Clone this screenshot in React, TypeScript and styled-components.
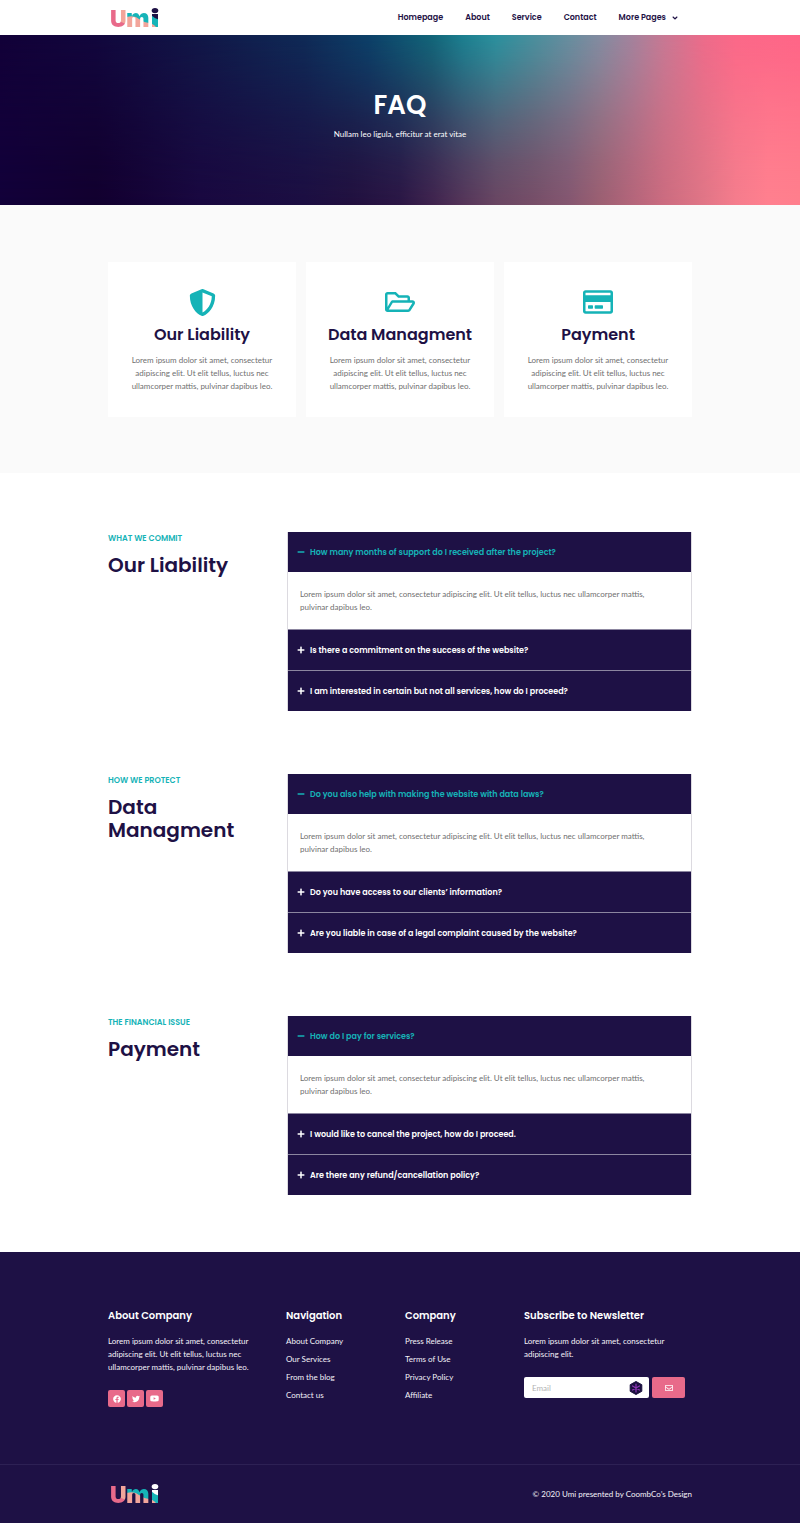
import React, { useId, useState } from "react";
import styled, { createGlobalStyle } from "styled-components";
import {
  FaAngleDown,
  FaFacebook,
  FaMinus,
  FaPlus,
  FaRegCreditCard,
  FaRegEnvelope,
  FaRegFolderOpen,
  FaShieldAlt,
  FaTwitter,
  FaYoutube,
} from "react-icons/fa";

const navy = "#1e1145";
const teal = "#15b3b7";
const pink = "#e86a8a";
const grey = "#6f6f6f";
const display = `Poppins, Inter, "Liberation Sans", sans-serif`;

const GlobalStyle = createGlobalStyle`
  *, *::before, *::after { box-sizing: border-box; }
  body {
    margin: 0;
    background: #fff;
    color: ${grey};
    font-family: Lato, "Liberation Sans", sans-serif;
    font-size: 8px;
    line-height: 13px;
  }
  h1, h2, h3, p, ul { margin: 0; padding: 0; }
  ul { list-style: none; }
  a { color: inherit; text-decoration: none; }
  button, input { font: inherit; border: 0; }
  button { cursor: pointer; }
`;

const Container = styled.div`
  width: 100%;
  max-width: 584px;
  margin: 0 auto;
`;

const Header = styled.header`
  background: #fff;
`;

const HeaderRow = styled(Container)`
  display: flex;
  align-items: center;
  justify-content: space-between;
  height: 35px;
  padding-right: 13px;
`;

const LogoLink = styled.a`
  display: block;
  height: 24px;
`;

const Nav = styled.nav`
  display: flex;
  gap: 22px;
`;

const NavLink = styled.a`
  display: flex;
  align-items: center;
  gap: 5px;
  color: ${navy};
  font-family: ${display};
  font-weight: 600;
`;

/* Two horizontal colour ramps: the upper one fades out over the lower one. */
const Hero = styled.section`
  position: relative;
  isolation: isolate;
  display: flex;
  flex-direction: column;
  align-items: center;
  gap: 7px;
  padding: 54px 0 64px;
  color: #fff;
  text-align: center;
  background: linear-gradient(90deg, #12003a 0%, #12002f 12%, #190840 25%, #1c0e42 38%, #22103f 44%, #2c1645 50%, #40234e 54%, #563559 58%, #6a4562 62%, #784e68 67%, #855670 71%, #9c5f72 75%, #b4657a 79%, #cc6c80 83%, #e17687 88%, #f57d8d 92%, #ff808f 96%, #ff7f8d 100%);

  &::before {
    content: "";
    position: absolute;
    inset: 0;
    z-index: -1;
    background: linear-gradient(90deg, #120038 0%, #12063d 12%, #111747 25%, #0f2a56 38%, #0c4068 46%, #126579 54%, #1c8090 58%, #2b909d 62%, #4b8f9d 67%, #668e9f 71%, #838ba0 75%, #a3829c 79%, #c77893 83%, #ec6b8a 88%, #fb6888 92%, #ff6587 100%);
    mask-image: linear-gradient(180deg, #000 0%, rgba(0, 0, 0, 0.85) 15%, rgba(0, 0, 0, 0.4) 50%, rgba(0, 0, 0, 0.15) 75%, transparent 100%);
  }
`;

const HeroTitle = styled.h1`
  font-family: ${display};
  font-size: 26px;
  line-height: 32px;
  font-weight: 600;
`;

const Features = styled.section`
  padding: 57px 0 56px;
  background: #fafafa;
`;

const FeatureGrid = styled(Container)`
  display: grid;
  grid-template-columns: repeat(3, minmax(0, 1fr));
  gap: 10px;
`;

const FeatureCard = styled.article`
  display: flex;
  flex-direction: column;
  align-items: center;
  padding: 24px 18px;
  background: #fff;
  text-align: center;
  svg { color: ${teal}; }
`;

const FeatureTitle = styled.h2`
  margin: 6px 0 8px;
  color: ${navy};
  font-family: ${display};
  font-size: 16px;
  line-height: 22px;
  font-weight: 600;
  white-space: nowrap;
`;

const FaqList = styled(Container)`
  display: flex;
  flex-direction: column;
  gap: 63px;
  padding: 59px 0 57px;
`;

const FaqBlock = styled.section`
  display: grid;
  grid-template-columns: 153px 1fr;
  column-gap: 26px;
  align-items: start;
`;

const Eyebrow = styled.p`
  color: ${teal};
  font-family: ${display};
  font-weight: 600;
  text-transform: uppercase;
`;

const FaqTitle = styled.h2`
  margin-top: 9px;
  color: ${navy};
  font-family: ${display};
  font-size: 20px;
  line-height: 23px;
  font-weight: 600;
`;

const Accordion = styled.div`
  border: 1px solid #dcdae0;
  border-width: 0 1px;
`;

const AccordionItem = styled.div`
  & + & { border-top: 1px solid #8c86a0; }
`;

const AccordionButton = styled.button<{ $open: boolean }>`
  display: flex;
  align-items: center;
  gap: 5px;
  width: 100%;
  height: 40px;
  padding: 0 9px;
  background: ${navy};
  color: ${(p) => (p.$open ? teal : "#fff")};
  font-family: ${display};
  font-weight: 600;
  text-align: left;
`;

const Answer = styled.p`
  padding: 16px 20px 15px 12px;
`;

const Footer = styled.footer`
  background: ${navy};
  color: #f4f2f8;
`;

const FooterGrid = styled(Container)`
  display: grid;
  grid-template-columns: 178px 119px 119px 1fr;
  padding: 57px 0;
`;

const FooterColumn = styled.div`
  min-width: 0;
`;

const FooterTitle = styled.h3`
  margin-bottom: 12px;
  color: #fff;
  font-family: ${display};
  font-size: 10px;
  line-height: 14px;
  font-weight: 600;
  white-space: nowrap;
`;

const FooterText = styled.p`
  max-width: 154px;
`;

const FooterLinks = styled.ul`
  display: flex;
  flex-direction: column;
  gap: 5px;
`;

const Socials = styled.div`
  display: flex;
  gap: 2px;
  margin-top: 16px;
`;

const SocialLink = styled.a`
  display: flex;
  align-items: center;
  justify-content: center;
  width: 17px;
  height: 17px;
  border-radius: 2px;
  background: ${pink};
  color: #fff;
`;

const Form = styled.form`
  display: flex;
  gap: 3px;
  margin: 16px 7px 0 0;
`;

const EmailField = styled.label`
  position: relative;
  flex: 1;
  svg {
    position: absolute;
    top: 4px;
    right: 6px;
  }
`;

const EmailInput = styled.input`
  display: block;
  width: 100%;
  height: 21px;
  padding: 0 24px 0 8px;
  border-radius: 2px;
  background: #fff;
  color: ${navy};
  &::placeholder { color: #b3b3b3; opacity: 1; }
`;

const SubmitButton = styled.button`
  display: flex;
  align-items: center;
  justify-content: center;
  width: 33px;
  height: 21px;
  padding: 0;
  border-radius: 2px;
  background: ${pink};
  color: #fff;
`;

const FooterBottom = styled.div`
  border-top: 1px solid #2d2154;
`;

const FooterBottomRow = styled(Container)`
  display: flex;
  align-items: center;
  justify-content: space-between;
  height: 58px;
`;

function Logo({ accent }: { accent: string }) {
  const id = useId();
  return (
    <svg width="52" height="24" viewBox="0 0 52 24" role="img" aria-label="Umi">
      <defs>
        <clipPath id={id}>
          <text x="2" y="21" fontFamily="Inter, sans-serif" fontWeight="900" fontSize="23">U</text>
          <text x="18" y="21" fontFamily="Inter, sans-serif" fontWeight="900" fontSize="25">m</text>
          <rect x="44" y="8" width="6" height="13" />
          <ellipse cx="47" cy="4.600" rx="3.300" ry="2.600" />
        </clipPath>
      </defs>
      <g clipPath={`url(#${id})`}>
        <rect width="52" height="24" fill="#f2a59b" />
        <path d="M0 0H11V15L18 18V24H0Z" fill="#e86a8a" />
        <path d="M18.500 0H52V24H50Q47 18 41 17Q35 16 31 13Q27 9 18.500 11Z" fill="#16b4b8" />
        <path d="M43 0H52V14Q47 13 43 9Z" fill={accent} />
      </g>
    </svg>
  );
}

function HexagonBadge() {
  return (
    <svg width="14" height="14" viewBox="0 0 14 14" aria-hidden="true">
      <path d="M7 .5 12.8 3.7V10.3L7 13.5 1.2 10.3V3.7Z" fill="#1b103f" stroke="#1b103f" strokeLinejoin="round" />
      <path d="M7 3V11M3.5 5 10.5 9M10.5 5 3.5 9" stroke="#8d35b5" strokeWidth="1.2" strokeLinecap="round" />
    </svg>
  );
}

const lorem =
  "Lorem ipsum dolor sit amet, consectetur adipiscing elit. Ut elit tellus, luctus nec ullamcorper mattis, pulvinar dapibus leo.";

const features = [
  { title: "Our Liability", icon: FaShieldAlt, size: 27 },
  { title: "Data Managment", icon: FaRegFolderOpen, size: 30 },
  { title: "Payment", icon: FaRegCreditCard, size: 30 },
];

const IconBox = styled.div`
  display: flex;
  align-items: center;
  justify-content: center;
  height: 32px;
`;

const topics = [
  {
    eyebrow: "What we commit",
    title: "Our Liability",
    questions: [
      "How many months of support do I received after the project?",
      "Is there a commitment on the success of the website?",
      "I am interested in certain but not all services, how do I proceed?",
    ],
  },
  {
    eyebrow: "How we protect",
    title: "Data Managment",
    questions: [
      "Do you also help with making the website with data laws?",
      "Do you have access to our clients’ information?",
      "Are you liable in case of a legal complaint caused by the website?",
    ],
  },
  {
    eyebrow: "The financial issue",
    title: "Payment",
    questions: [
      "How do I pay for services?",
      "I would like to cancel the project, how do I proceed.",
      "Are there any refund/cancellation policy?",
    ],
  },
];

function Questions({ items }: { items: string[] }) {
  const [open, setOpen] = useState(0);
  return (
    <Accordion>
      {items.map((question, i) => (
        <AccordionItem key={question}>
          <AccordionButton
            type="button"
            $open={open === i}
            aria-expanded={open === i}
            onClick={() => setOpen(open === i ? -1 : i)}
          >
            {open === i ? <FaMinus size={8} /> : <FaPlus size={8} />}
            {question}
          </AccordionButton>
          {open === i && <Answer>{lorem}</Answer>}
        </AccordionItem>
      ))}
    </Accordion>
  );
}

function LinkColumn({ title, links }: { title: string; links: string[] }) {
  return (
    <FooterColumn>
      <FooterTitle>{title}</FooterTitle>
      <FooterLinks>
        {links.map((link) => (
          <li key={link}>
            <a href="#">{link}</a>
          </li>
        ))}
      </FooterLinks>
    </FooterColumn>
  );
}

export default function App() {
  return (
    <>
      <GlobalStyle />
      <Header>
        <HeaderRow>
          <LogoLink href="#">
            <Logo accent={navy} />
          </LogoLink>
          <Nav>
            <NavLink href="#">Homepage</NavLink>
            <NavLink href="#">About</NavLink>
            <NavLink href="#">Service</NavLink>
            <NavLink href="#">Contact</NavLink>
            <NavLink href="#">
              More Pages <FaAngleDown size={8} />
            </NavLink>
          </Nav>
        </HeaderRow>
      </Header>
      <main>
        <Hero>
          <HeroTitle>FAQ</HeroTitle>
          <p>Nullam leo ligula, efficitur at erat vitae</p>
        </Hero>
        <Features>
          <FeatureGrid>
            {features.map(({ title, icon: Icon, size }) => (
              <FeatureCard key={title}>
                <IconBox>
                  <Icon size={size} />
                </IconBox>
                <FeatureTitle>{title}</FeatureTitle>
                <p>{lorem}</p>
              </FeatureCard>
            ))}
          </FeatureGrid>
        </Features>
        <FaqList>
          {topics.map((topic) => (
            <FaqBlock key={topic.title}>
              <div>
                <Eyebrow>{topic.eyebrow}</Eyebrow>
                <FaqTitle>{topic.title}</FaqTitle>
              </div>
              <Questions items={topic.questions} />
            </FaqBlock>
          ))}
        </FaqList>
      </main>
      <Footer>
        <FooterGrid>
          <FooterColumn>
            <FooterTitle>About Company</FooterTitle>
            <FooterText>{lorem}</FooterText>
            <Socials>
              <SocialLink href="#" aria-label="Facebook"><FaFacebook size={8} /></SocialLink>
              <SocialLink href="#" aria-label="Twitter"><FaTwitter size={8} /></SocialLink>
              <SocialLink href="#" aria-label="YouTube"><FaYoutube size={9} /></SocialLink>
            </Socials>
          </FooterColumn>
          <LinkColumn title="Navigation" links={["About Company", "Our Services", "From the blog", "Contact us"]} />
          <LinkColumn title="Company" links={["Press Release", "Terms of Use", "Privacy Policy", "Affiliate"]} />
          <FooterColumn>
            <FooterTitle>Subscribe to Newsletter</FooterTitle>
            <FooterText>Lorem ipsum dolor sit amet, consectetur adipiscing elit.</FooterText>
            <Form onSubmit={(e) => e.preventDefault()}>
              <EmailField>
                <EmailInput type="email" placeholder="Email" aria-label="Email" />
                <HexagonBadge />
              </EmailField>
              <SubmitButton type="submit" aria-label="Subscribe">
                <FaRegEnvelope size={8} />
              </SubmitButton>
            </Form>
          </FooterColumn>
        </FooterGrid>
        <FooterBottom>
          <FooterBottomRow>
            <LogoLink href="#">
              <Logo accent="#fff" />
            </LogoLink>
            <p>© 2020 Umi presented by CoombCo’s Design</p>
          </FooterBottomRow>
        </FooterBottom>
      </Footer>
    </>
  );
}
